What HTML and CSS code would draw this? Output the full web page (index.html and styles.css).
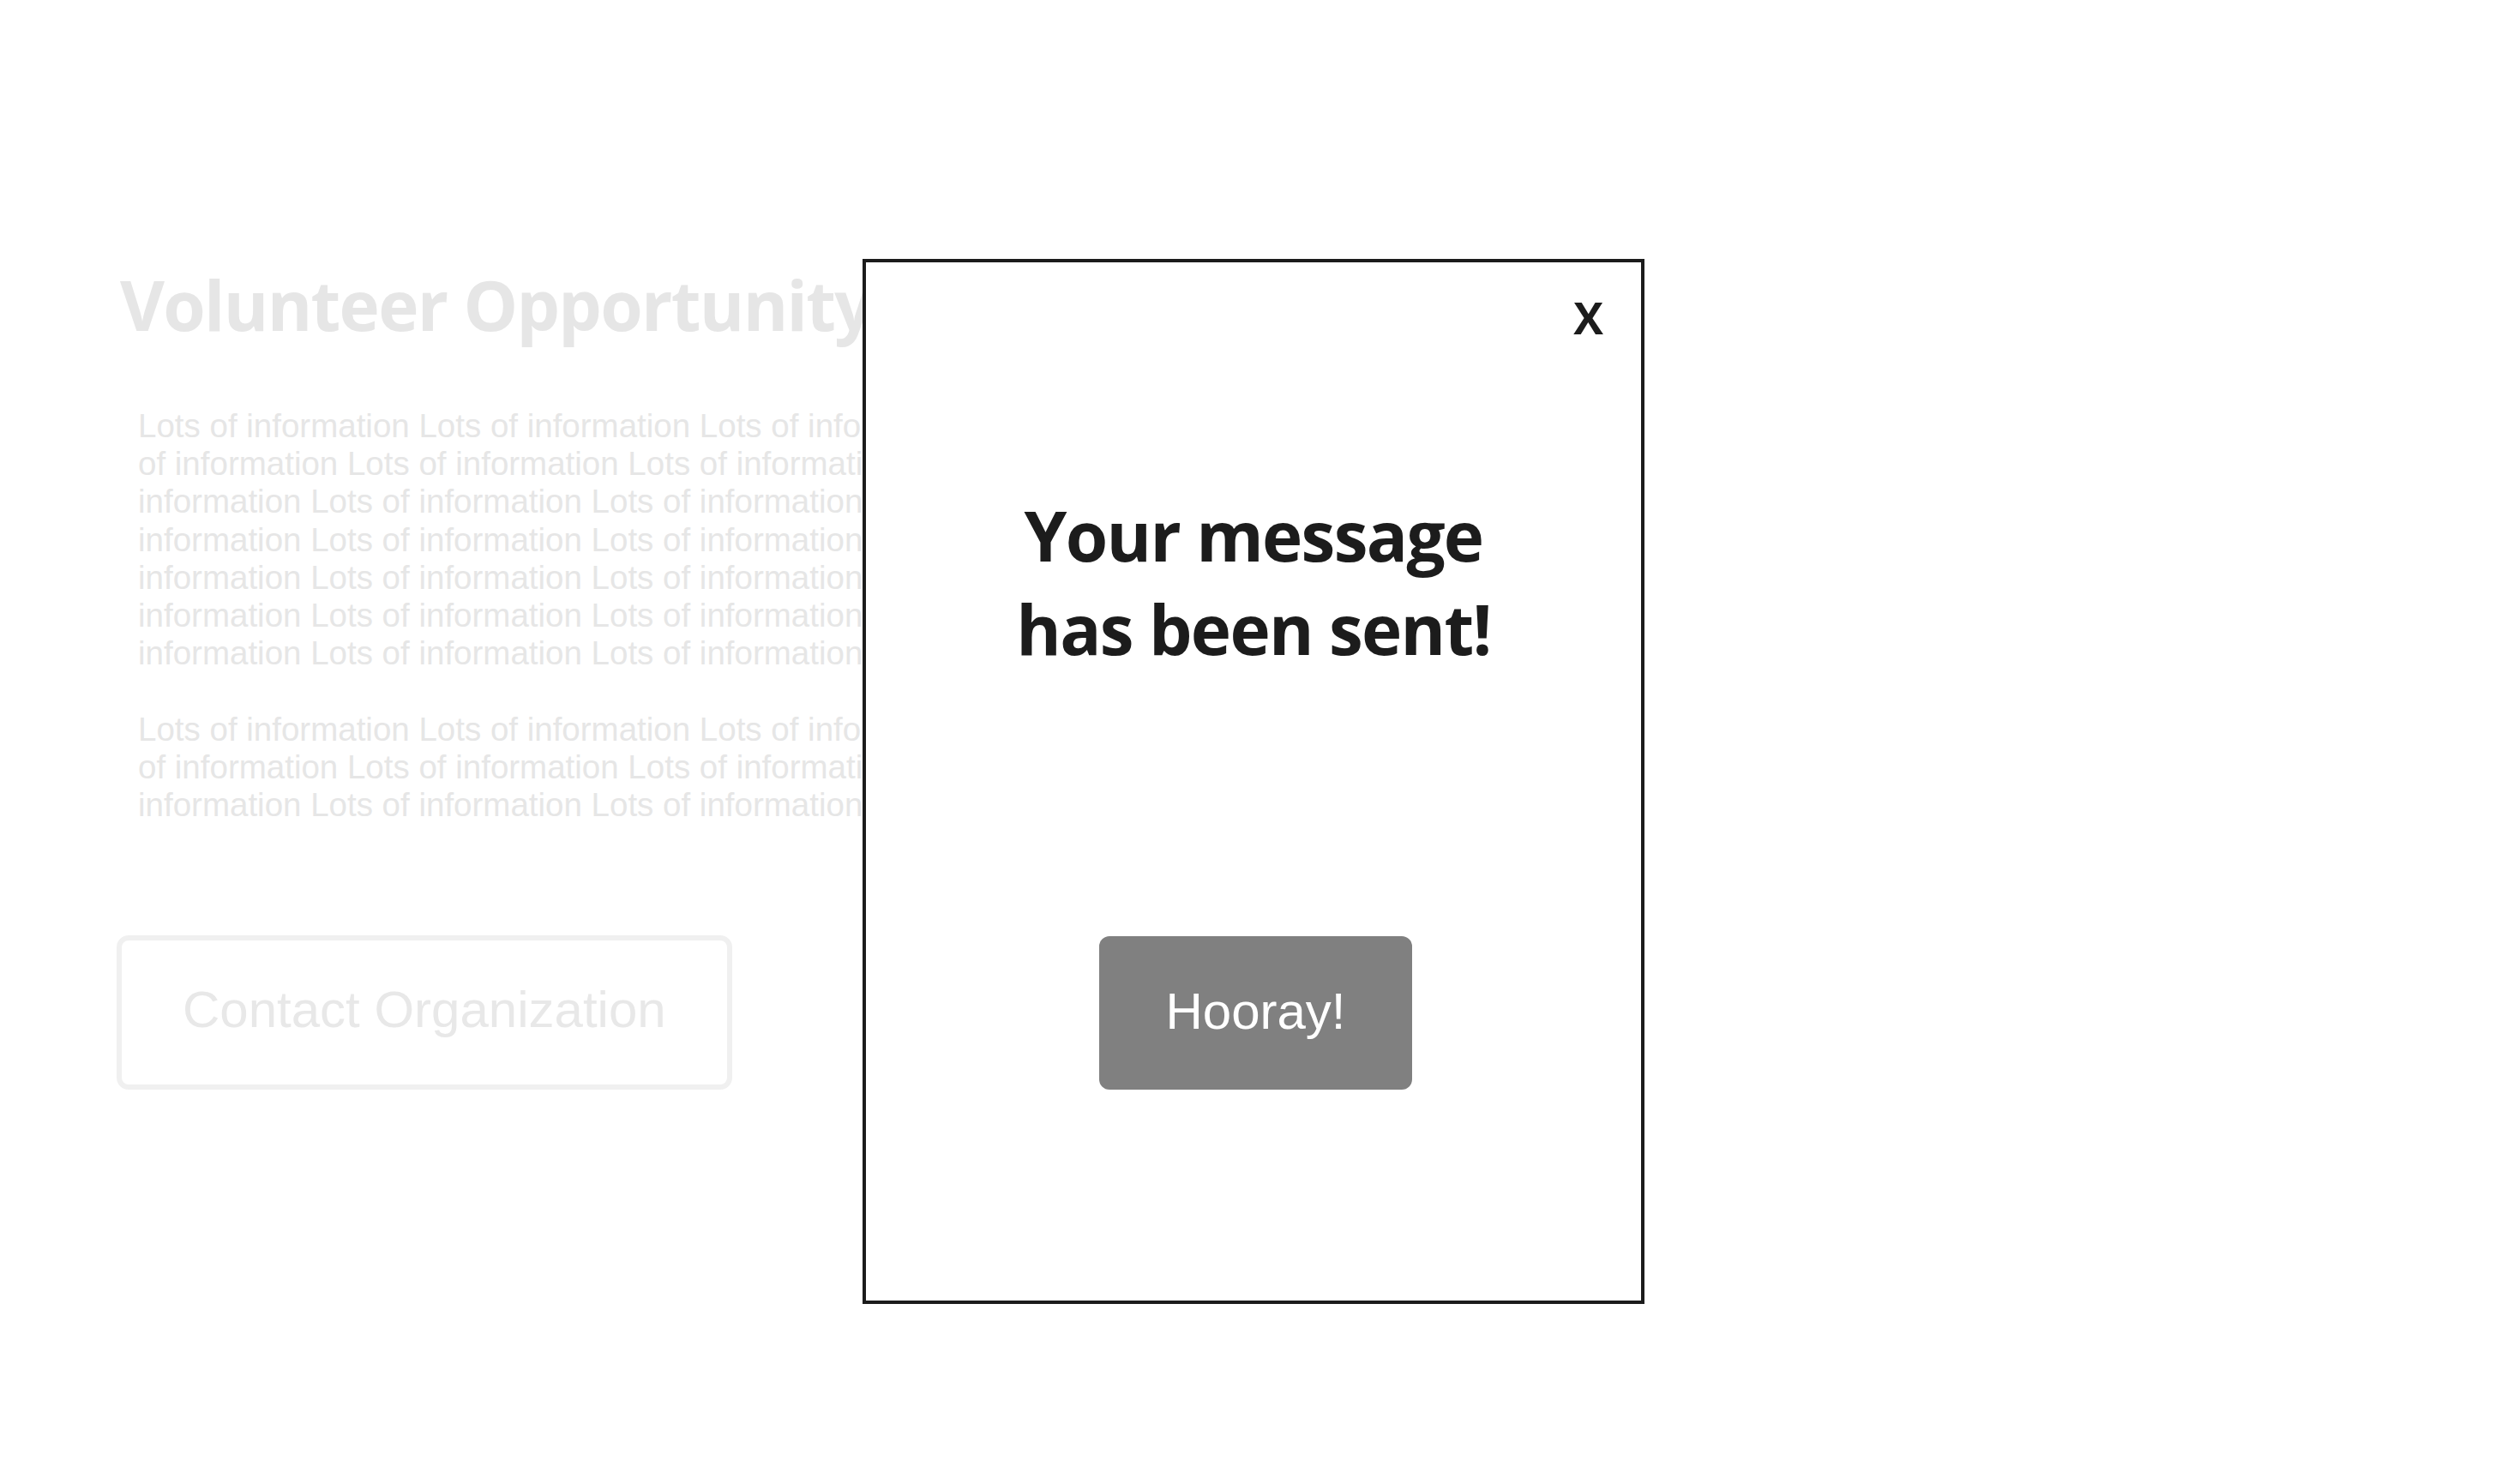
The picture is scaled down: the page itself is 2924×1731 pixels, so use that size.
FILE: index.html
```html
<!DOCTYPE html>
<html lang="en">
<head>
<meta charset="utf-8">
<title>Volunteer Opportunity</title>
<link rel="stylesheet" href="styles.css">
</head>
<body>
<main class="page">
  <h1 class="page-title">Volunteer Opportunity</h1>
  <div class="info">
    <p class="info-para">Lots of information Lots of information Lots of information Lots of information Lots of information Lots of information Lots of information Lots of information Lots of information Lots of information Lots of information Lots of information Lots of information Lots of information Lots of information Lots of information Lots of information Lots of information Lots of information Lots of information Lots of information Lots of information Lots of information Lots of information Lots of information Lots of information Lots of information Lots of information</p>
    <p class="info-para">Lots of information Lots of information Lots of information Lots of information Lots of information Lots of information Lots of information Lots of information Lots of information Lots of information Lots of information Lots of information</p>
  </div>
  <button class="contact-btn" type="button">Contact Organization</button>
</main>

<div class="modal" role="dialog" aria-modal="true">
  <button class="modal-close" type="button">X</button>
  <h2 class="modal-title">Your message has been sent!</h2>
  <button class="modal-btn" type="button">Hooray!</button>
</div>
</body>
</html>
```

FILE: styles.css
```css
html, body {
  margin: 0;
  padding: 0;
  background: #ffffff;
}

body {
  width: 2924px;
  height: 1731px;
  position: relative;
  overflow: hidden;
  font-family: "Liberation Sans", Arial, sans-serif;
}

.page {
  display: flex;
  flex-direction: column;
  align-items: flex-start;
  padding: 300px 0 0 136px;
}

.page-title {
  margin: 0 0 0 4px;
  font-family: "Open Sans", sans-serif;
  font-weight: 700;
  font-size: 80px;
  line-height: 109px;
  letter-spacing: -1.7px;
  color: #e6e6e6;
  white-space: nowrap;
}

.info {
  margin: 66px 0 0 25px;
  width: 1400px;
}

.info-para {
  margin: 0 0 44.24px 0;
  font-family: "Liberation Sans", Arial, sans-serif;
  font-size: 38.5px;
  line-height: 44.24px;
  color: #e6e6e6;
}

.info-para:last-child {
  margin-bottom: 0;
}

.contact-btn {
  margin-top: 129px;
  padding: 46px 71px 53px;
  border: 6px solid #f0f0f0;
  border-radius: 14px;
  background: #ffffff;
  font-family: "Liberation Sans", Arial, sans-serif;
  font-size: 60px;
  line-height: 69px;
  color: #e8e8e8;
  white-space: nowrap;
}

.modal {
  position: absolute;
  left: 1006px;
  top: 302px;
  width: 912px;
  height: 1219px;
  box-sizing: border-box;
  border: 4px solid #1c1c1c;
  background: #ffffff;
  display: flex;
  flex-direction: column;
  align-items: center;
  padding-top: 28px;
}

.modal-close {
  align-self: flex-end;
  margin-right: 44px;
  padding: 0;
  border: none;
  background: transparent;
  font-family: "Open Sans", sans-serif;
  font-weight: 700;
  font-size: 52px;
  line-height: 71px;
  color: #1c1c1c;
}

.modal-title {
  margin: 164px 0 0 0;
  width: 620px;
  text-align: center;
  font-family: "Open Sans", sans-serif;
  font-weight: 700;
  font-size: 80px;
  line-height: 109px;
  letter-spacing: -1.7px;
  color: #1c1c1c;
}

.modal-btn {
  margin-top: 305px;
  margin-left: 5px;
  padding: 53px 77px 57px;
  border: none;
  border-radius: 12px;
  background: #808080;
  font-family: "Liberation Sans", Arial, sans-serif;
  font-size: 60px;
  line-height: 69px;
  color: #ffffff;
  white-space: nowrap;
}
```
